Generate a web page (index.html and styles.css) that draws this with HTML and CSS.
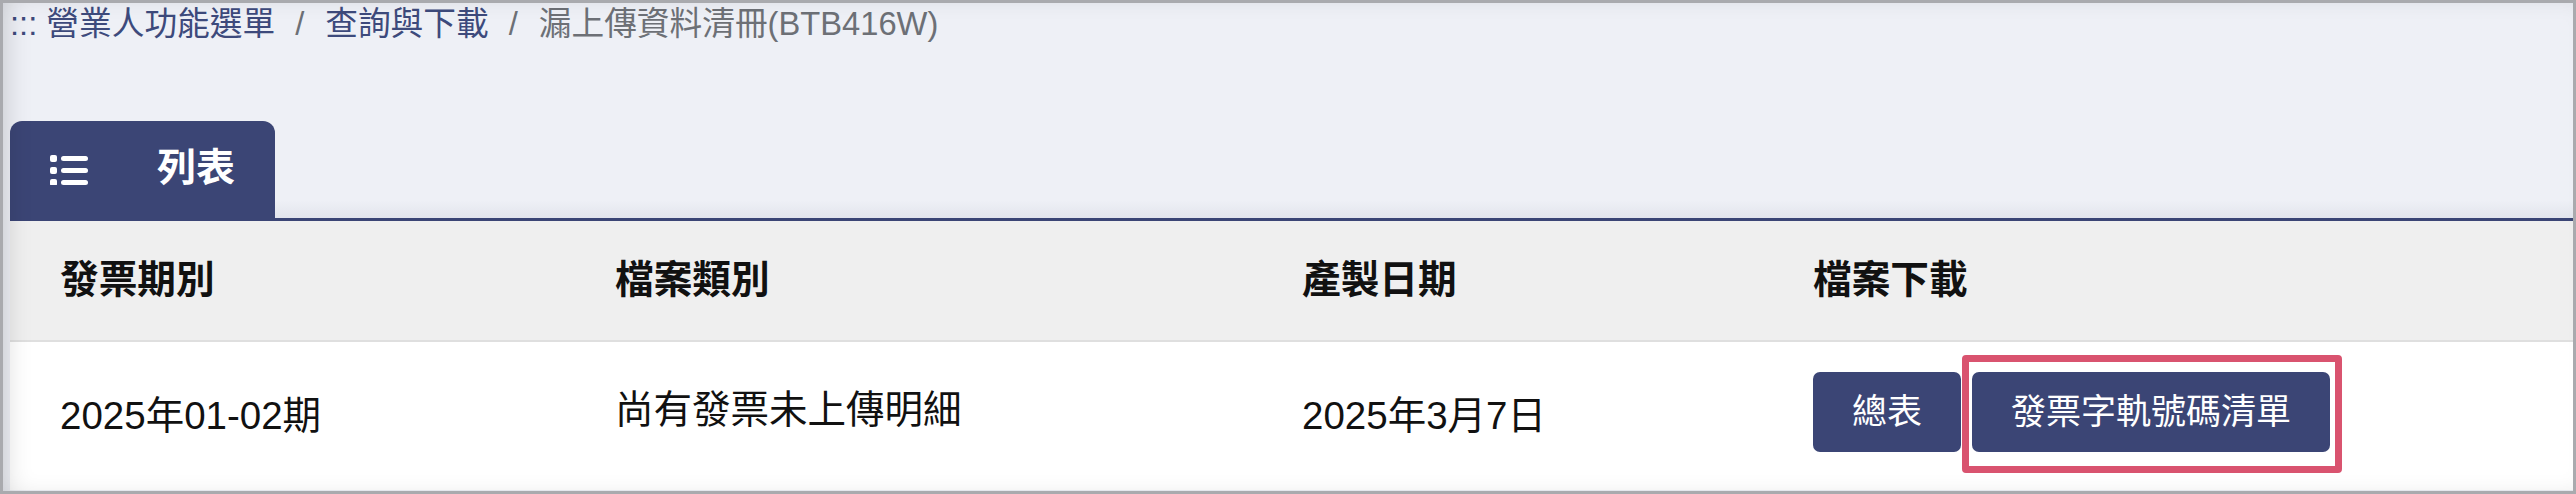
FILE: index.html
```html
<!DOCTYPE html>
<html lang="zh-Hant">
<head>
<meta charset="utf-8">
<title>漏上傳資料清冊(BTB416W)</title>
<link rel="stylesheet" href="styles.css">
</head>
<body>
<div class="frame">
  <nav class="breadcrumb">
    <span class="crumb-mark">:::</span>&nbsp;<a class="crumb-link" href="#">營業人功能選單</a><span class="crumb-sep">/</span><a class="crumb-link" href="#">查詢與下載</a><span class="crumb-sep">/</span><span class="crumb-current">漏上傳資料清冊(BTB416W)</span>
  </nav>

  <div class="tabbar">
    <div class="tab">
      <svg class="tab-icon" viewBox="0 0 38 30" width="38" height="30" aria-hidden="true">
        <rect x="0" y="0" width="7" height="7" rx="2" fill="#fff"/>
        <rect x="0" y="12" width="7" height="7" rx="2" fill="#fff"/>
        <rect x="0" y="24" width="7" height="7" rx="2" fill="#fff"/>
        <rect x="11" y="1" width="27" height="5" rx="2.5" fill="#fff"/>
        <rect x="11" y="13" width="27" height="5" rx="2.5" fill="#fff"/>
        <rect x="11" y="25" width="27" height="5" rx="2.5" fill="#fff"/>
      </svg>
      <span class="tab-label">列表</span>
    </div>
  </div>

  <table class="list-table">
    <colgroup>
      <col class="col-period">
      <col class="col-type">
      <col class="col-date">
      <col class="col-download">
    </colgroup>
    <thead>
      <tr class="head-row">
        <th>發票期別</th>
        <th>檔案類別</th>
        <th>產製日期</th>
        <th>檔案下載</th>
      </tr>
    </thead>
    <tbody>
      <tr class="data-row">
        <td>2025年01-02期</td>
        <td class="cell-cjk">尚有發票未上傳明細</td>
        <td>2025年3月7日</td>
        <td class="cell-actions">
          <div class="actions">
            <button class="btn" type="button">總表</button>
            <span class="highlight"><button class="btn" type="button">發票字軌號碼清單</button></span>
          </div>
        </td>
      </tr>
    </tbody>
  </table>
</div>
</body>
</html>
```

FILE: styles.css
```css
html, body {
  margin: 0;
  padding: 0;
}

body {
  width: 2576px;
  height: 494px;
  overflow: hidden;
  font-family: "Liberation Sans", "Noto Sans CJK TC", sans-serif;
  background: #eef0f6;
}

.frame {
  position: relative;
  box-sizing: border-box;
  width: 2576px;
  height: 494px;
  border: 3px solid #a9aaae;
  padding-left: 7px;
  background: #eef0f6;
  display: flex;
  flex-direction: column;
}

.frame::after {
  content: "";
  position: absolute;
  inset: 0;
  pointer-events: none;
  box-shadow: inset 12px 0 30px -14px rgba(0, 0, 0, 0.22);
}

/* breadcrumb */
.breadcrumb {
  height: 40px;
  padding-top: 1px;
  font-size: 32.7px;
  line-height: 40px;
  white-space: nowrap;
  color: #3d4a7c;
}

.crumb-mark {
  color: #3d4a7c;
}

.crumb-link {
  color: #3d4a7c;
  text-decoration: none;
}

.crumb-sep {
  padding: 0 21px 0 20px;
  color: #6d7076;
}

.crumb-current {
  color: #6d7076;
}

/* tabs */
.tabbar {
  margin-top: 77px;
  display: flex;
  border-bottom: 3px solid #3b4575;
  background: linear-gradient(to bottom, rgba(0,0,0,0) 82%, rgba(40,50,90,0.06) 100%);
}

.tab {
  height: 97px;
  box-sizing: border-box;
  padding: 0 40px;
  display: flex;
  align-items: center;
  gap: 69px;
  background: #3b4575;
  border-radius: 12px 12px 0 0;
  color: #fff;
}

.tab-icon {
  display: block;
  margin-top: 1px;
}

.tab-label {
  font-size: 39px;
  font-weight: bold;
  line-height: 1.2;
  margin-bottom: 3px;
}

/* table */
.list-table {
  width: 2563px;
  border-collapse: collapse;
  table-layout: fixed;
}

.col-period { width: 555px; }
.col-type { width: 687px; }
.col-date { width: 511px; }
.col-download { width: auto; }

.head-row {
  background: #efefef;
  border-bottom: 2px solid #dfdfdf;
}

.head-row th {
  height: 119px;
  padding: 0 0 0 50px;
  text-align: left;
  font-size: 38.7px;
  font-weight: bold;
  line-height: 1.2;
  color: #111;
  vertical-align: middle;
  white-space: nowrap;
}

.data-row {
  background: #fff;
}

.data-row td {
  height: 149px;
  box-sizing: border-box;
  padding: 0 0 0 50px;
  font-size: 38.5px;
  line-height: 1.2;
  color: #111;
  vertical-align: middle;
  white-space: nowrap;
}

.data-row td.cell-cjk {
  padding-bottom: 12px;
}

.data-row td.cell-actions {
  padding-bottom: 9px;
}

.actions {
  display: flex;
  align-items: center;
  gap: 11px;
}

.btn {
  height: 80px;
  padding: 0 39px;
  border: none;
  border-radius: 7px;
  background: #3b4575;
  color: #fff;
  font-family: "Liberation Sans", "Noto Sans CJK TC", sans-serif;
  font-size: 35px;
  line-height: 80px;
  white-space: nowrap;
  cursor: pointer;
}

.highlight {
  position: relative;
  display: block;
}

.highlight .btn {
  display: block;
}

.highlight::after {
  content: "";
  position: absolute;
  top: -17px;
  left: -10px;
  right: -12px;
  bottom: -21px;
  border: 7px solid #d9536f;
  border-radius: 4px;
  pointer-events: none;
}
```
